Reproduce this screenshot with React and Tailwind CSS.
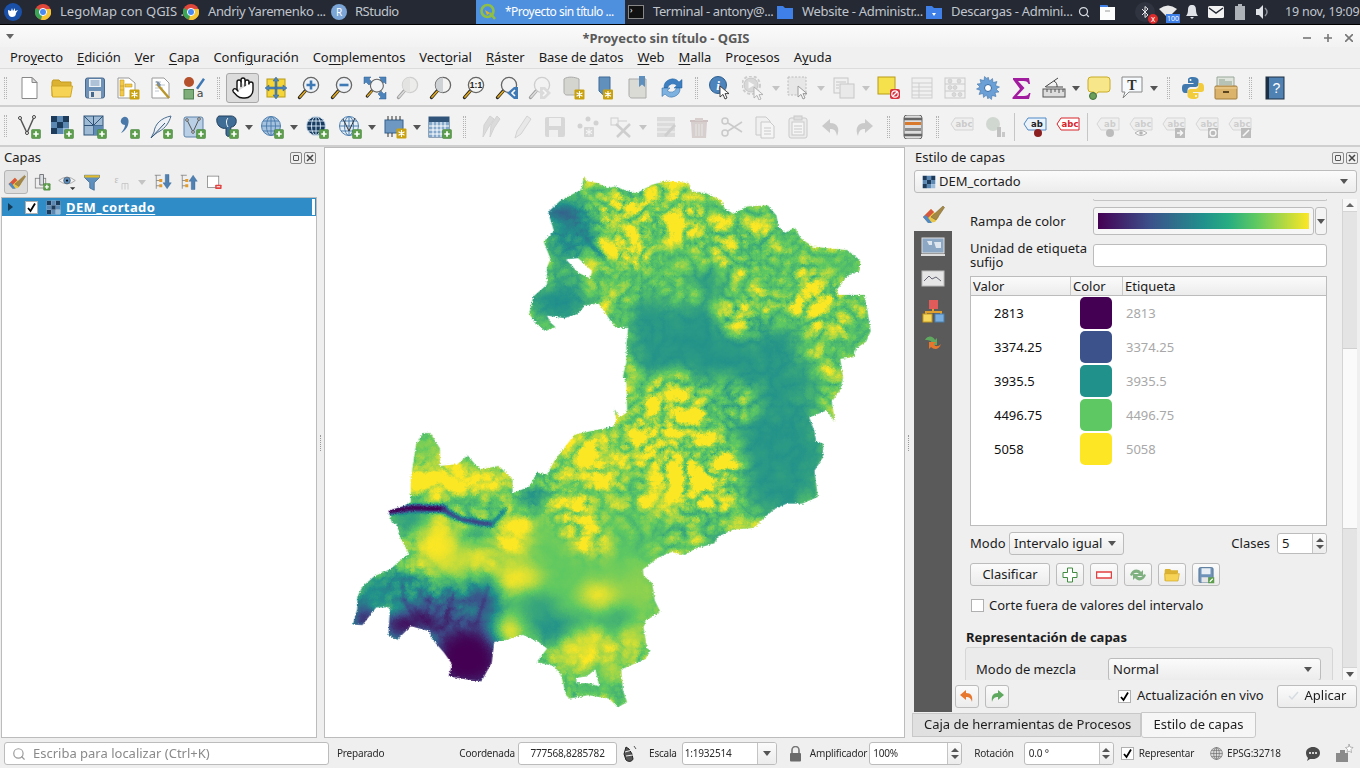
import { Hand, Search } from 'lucide-react';

const I = ({ children, s = 24, vb = '0 0 24 24' }) => (
  <svg width={s} height={s} viewBox={vb} className="block shrink-0">{children}</svg>
);

const PlusB = ({ x = 14.5, y = 14.5 }) => (
  <g transform={`translate(${x} ${y})`}>
    <rect width="9" height="9" rx="1" fill="#5d9e4c" stroke="#3f7f35" strokeWidth=".5" />
    <path d="M1.8 4.5h5.4M4.5 1.8v5.4" stroke="#fff" strokeWidth="1.7" />
  </g>
);
const StarB = ({ x = 13.5, y = 13.5, c = '#c9a10e' }) => (
  <g transform={`translate(${x} ${y})`}>
    <rect width="10" height="10" rx="1" fill={c} />
    <path d="M5 1.5v7M2 3.2l6 3.6M8 3.2l-6 3.6" stroke="#fff" strokeWidth="1.1" />
  </g>
);
const Mag = ({ lens = '#eef2f6', c = '#666', h = '#e0a81e', children }) => (
  <g>
    <path d="M9 14L2.5 21.5" stroke="#222" strokeWidth="3.4" strokeLinecap="round" />
    <path d="M8 15.5L3 21" stroke={h} strokeWidth="1.8" strokeLinecap="round" />
    <circle cx="14" cy="9" r="7.6" fill={lens} stroke={c} strokeWidth="1.3" />
    {children}
  </g>
);
const Cursor = ({ x = 11, y = 10 }) => (
  <path transform={`translate(${x} ${y})`} d="M0 0l0 11 3-2.6 2 4.6 2-1-2-4.4h4z" fill="#fff" stroke="#333" strokeWidth=".9" strokeLinejoin="round" />
);
const Checker = () => (
  <g>
    <rect x="1" y="1" width="18" height="18" fill="#fff" />
    <path d="M1 1h6v6H1zM13 1h6v6h-6zM7 7h6v6H7zM1 13h6v6H1z" fill="#1d3c5c" />
    <path d="M7 1h6v6H7zM13 7h6v6h-6zM1 7h6v6H1zM7 13h6v6H7z" fill="#5b89b4" />
    <path d="M13 13h6v6h-6z" fill="#9dbcd8" />
  </g>
);
const Globe = ({ f = '#7ea6cf', s = '#2f5f90' }) => (
  <g fill="none" stroke={s} strokeWidth="1">
    <circle cx="11" cy="11" r="9.5" fill={f} />
    <ellipse cx="11" cy="11" rx="4.5" ry="9.5" />
    <path d="M1.5 11h19M3 6h16M3 16h16M11 1.5v19" />
  </g>
);
const Tag = ({ c = '#bbb', t = 'abc', f = '#eee', tc = '#aaa' }) => (
  <g>
    <path d="M5 3h18v12H5l-4-6z" fill={f} stroke={c} />
    <text x="14" y="12" fontSize="8.5" textAnchor="middle" fill={tc} fontFamily="'DejaVu Sans',sans-serif" fontWeight="700">{t}</text>
  </g>
);

const ICONS = {
  doc: <g><path d="M5 1.5h10l5 5v16H5z" fill="#fff" stroke="#888" /><path d="M15 1.5v5h5z" fill="#ddd" stroke="#888" /></g>,
  folder: <g><path d="M2 20V6l1-2h6l2 2h10v4" fill="#dcb233" stroke="#c49a1f" /><path d="M1.5 10h21l-2 11H2.5z" fill="#f6d255" stroke="#d0a726" /></g>,
  save: <g><rect x="2.5" y="2" width="19" height="20" rx="2" fill="#6f93b8" stroke="#48698e" /><rect x="6" y="3" width="12" height="8" fill="#eef2f6" /><path d="M7.5 5h9M7.5 7h9M7.5 9h9" stroke="#6f93b8" /><rect x="6" y="15" width="12" height="7" fill="#e6e6e6" /><rect x="8" y="16" width="3" height="5" fill="#48698e" /></g>,
  saveStar: <g><path d="M2 2h11l6 5v15H2z" fill="#fff" stroke="#999" /><path d="M4 4h4v16H4zM9 8h7v3H9z" fill="#f2c94c" stroke="#c49a1f" strokeWidth=".6" /><path d="M4 10h4M4 14h4" stroke="#c49a1f" strokeWidth=".7" /><StarB /></g>,
  props: <g><path d="M3 2h12l5 5v15H3z" fill="#fff" stroke="#9a9a9a" /><path d="M6 6h6M6 9h10M6 12h8M6 15h4" stroke="#bcc6d0" /><path d="M8 8l12 14" stroke="#b9962c" strokeWidth="2.4" /><path d="M8 8l-1-3 3 1 2 3-2 2z" fill="#7b8fa3" /></g>,
  styleMgr: <g><circle cx="7" cy="6" r="5" fill="#b4512c" /><path d="M14 12l7-10 2 1.5-7 10z" fill="#3f79b5" /><rect x="2" y="13.5" width="9.5" height="9.5" fill="#7fae7a" stroke="#4f7f4f" /><text x="18" y="21" fontSize="11" textAnchor="middle" fill="#444" fontFamily="'DejaVu Sans',sans-serif">a</text></g>,
  panSel: <g><rect x="3" y="3" width="18" height="18" fill="#f5d538" stroke="#b79c14" /><path d="M12 1l3 4h-2v14h2l-3 4-3-4h2V5H9zM1 12l4-3v2h14V9l4 3-4 3v-2H5v2z" fill="#4d84bb" stroke="#2e5f90" strokeWidth=".5" /></g>,
  zoomIn: <Mag><path d="M14 4.5v9M9.5 9h9" stroke="#3f79b5" strokeWidth="2.6" /></Mag>,
  zoomOut: <Mag><path d="M9.5 9h9" stroke="#3f79b5" strokeWidth="2.6" /></Mag>,
  zoomFull: <g><path d="M1 1h7L6 3l3 3-3 3-3-3-2 2zM23 1h-7l2 2-3 3 3 3 3-3 2 2zM23 23h-7l2-2-3-3 3-3 3 3 2-2z" fill="#4d84bb" stroke="#2e5f90" strokeWidth=".5" /><g transform="translate(2 2) scale(.85)"><Mag lens="#f2f4f6" /></g></g>,
  zoomLayerOff: <g opacity=".4"><Mag c="#999" h="#bbb" lens="#e4e4e0"><path d="M14 1.5a7.5 7.5 0 0 0 0 15z" fill="#cfcfc8" /></Mag></g>,
  zoomSel: <Mag lens="#f4f4f2"><path d="M14 1.5a7.5 7.5 0 0 0 0 15z" fill="#cfd2d4" /></Mag>,
  zoomOne: <Mag lens="#f4f4f2"><text x="14" y="12" fontSize="8.5" fontWeight="700" textAnchor="middle" fill="#222" fontFamily="'Liberation Sans',sans-serif">1:1</text></Mag>,
  zoomLast: <g><Mag lens="#f2f2f2" /><path d="M23 11v12h-4l-7-6 7-6z" fill="#3f79b5" /><path d="M20 14l-3 3 3 3" stroke="#fff" strokeWidth="1.6" fill="none" /></g>,
  zoomNextOff: <g opacity=".4"><Mag c="#999" h="#bbb" lens="#f2f2f2" /><path d="M12 11v12h5l6-6-6-6z" fill="#bbb" /><path d="M15 14l3 3-3 3" stroke="#fff" strokeWidth="1.6" fill="none" /></g>,
  mapNew: <g><path d="M3 3c4-3 11-2 15 0v16H6c-3 0-3-3-3-3z" fill="#d5d5cf" stroke="#aaa" /><StarB /></g>,
  bookmark: <g><path d="M5 1h11v14l-5.5 5L5 15z" fill="#6290bd" stroke="#3f6a95" /><StarB x="9" /></g>,
  bookmarks: <g><path d="M2 3h17v19H5c-3 0-3-3-3-3z" fill="#dbdbd6" stroke="#aaa" /><path d="M12 0h6v11l-3-2.5-3 2.5z" fill="#5f8fbd" /></g>,
  refresh: <g fill="#3d7fc0" stroke="#1f5f9f" strokeWidth=".5"><path d="M4 12A8.5 8.5 0 0 1 19 6l3-2.5V12h-8l2.8-2.5A5.5 5.5 0 0 0 7.5 12z" /><path d="M20 12A8.5 8.5 0 0 1 5 18l-3 2.5V12h8l-2.8 2.5A5.5 5.5 0 0 0 16.5 12z" fill="#7db1df" /></g>,
  identify: <g><circle cx="9" cy="9" r="8.5" fill="#4d84bb" stroke="#2e5f90" /><text x="9" y="14" fontSize="13" fontWeight="700" fontStyle="italic" textAnchor="middle" fill="#fff" fontFamily="'Liberation Serif',serif">i</text><Cursor x="11" y="10" /></g>,
  runOff: <g opacity=".35"><circle cx="9" cy="9" r="7" fill="#aaa" stroke="#777" /><circle cx="9" cy="9" r="9" fill="none" stroke="#888" strokeDasharray="3 2" strokeWidth="2" /><path d="M6.5 5.5l6 3.5-6 3.5z" fill="#fff" /><Cursor x="12" y="11" /></g>,
  selectOff: <g opacity=".5"><rect x="1" y="1" width="18" height="18" fill="#ddd" stroke="#888" strokeDasharray="2 1.5" /><Cursor x="11" y="10" /></g>,
  attrOff: <g opacity=".4"><rect x="2" y="2" width="14" height="15" fill="#eee" stroke="#888" /><rect x="8" y="8" width="14" height="14" fill="#ddd" stroke="#888" /><path d="M4 6h10M4 9h3M4 12h3" stroke="#888" /></g>,
  deselect: <g><rect x="1" y="1" width="17" height="17" fill="#f5e14c" stroke="#b79c14" /><rect x="13" y="13" width="10" height="10" rx="2" fill="#d9333f" /><circle cx="18" cy="18" r="3.2" fill="none" stroke="#fff" strokeWidth="1.2" /><path d="M16 20l4-4" stroke="#fff" strokeWidth="1.2" /></g>,
  tableOff: <g opacity=".4"><rect x="2" y="2" width="20" height="20" fill="#eee" stroke="#999" /><path d="M2 7h20M2 11h20M2 15h20M2 19h20M9 7v15" stroke="#999" /></g>,
  abacusOff: <g opacity=".45"><rect x="2" y="2" width="20" height="20" fill="#f0f0f0" stroke="#999" /><path d="M2 8h20M2 15h20" stroke="#999" /><g fill="#bbb" stroke="#888" strokeWidth=".5"><circle cx="7" cy="5" r="2" /><circle cx="16" cy="5" r="2" /><circle cx="7" cy="11.5" r="2" /><circle cx="12" cy="11.5" r="2" /><circle cx="17" cy="18.5" r="2" /><circle cx="11" cy="18.5" r="2" /></g></g>,
  gear: <g><path d="M12 1l1.5 4 3-2.5.5 4 4-1-1.5 4 4 1.5-3.5 2 3 3-4 .5 1 4-4-1-.5 4-3-2.5L12 23l-1.5-4-3 2.5-.5-4-4 1 1.5-4-4-1.5 3.5-2-3-3 4-.5-1-4 4 1 .5-4 3 2.5z" fill="#6ba0d6" stroke="#3568a0" strokeWidth=".5" /><circle cx="12" cy="12" r="3.5" fill="#fff" stroke="#3568a0" /></g>,
  sigma: <path d="M4 2h16l1 6h-1.5c-.5-2-2-3-5-3H9l6.5 7L8 20h7c3 0 4.5-1 5-3h1.5L20 23H3.5v-1.5L11 13 4 3.5z" fill="#a21ca0" />,
  measure: <g><rect x="1" y="13" width="22" height="8" fill="#ddd" stroke="#555" /><path d="M5 13v3M9 13v4M13 13v3M17 13v4M21 13v3" stroke="#555" /><path d="M3 11L16 2M4 11h17M12 5a6 6 0 0 1 3 6" stroke="#444" fill="none" /></g>,
  tips: <g><path d="M4 1h16q3 0 3 3v9q0 3-3 3H11l-4 5v-5H4q-3 0-3-3V4q0-3 3-3z" fill="#f7e78a" stroke="#c8ab24" /><circle cx="6" cy="20" r="3.5" fill="#6a9e5a" stroke="#44703d" /></g>,
  textAnn: <g><path d="M2 1h20v15H9l-6 6 2-6H2z" fill="#f6fafc" stroke="#888" /><text x="12" y="14" fontSize="14" textAnchor="middle" fill="#333" fontFamily="'Liberation Serif',serif" fontWeight="700">T</text></g>,
  python: <g><path d="M12 1c-5 0-5 2-5 3v3h5.5v1H4c-3 0-3 3-3 5s1 4 3 4h2.5v-3c0-2 2-3 3-3h5c1.5 0 3-1 3-3V4c0-1.5-2-3-5.5-3z" fill="#3f79ad" /><path d="M12.5 23c5 0 5-2 5-3v-3H12v-1h8.5c3 0 2.5-3 2.5-5s-1-4-3-4h-2.5v3c0 2-2 3-3 3h-5c-1.5 0-3 1-3 3v4c0 1.5 2 3 5.5 3z" fill="#f2cc3c" /><circle cx="9.5" cy="4" r="1" fill="#fff" /><circle cx="15" cy="20" r="1" fill="#fff" /></g>,
  chest: <g><path d="M3 1h17v11H3z" fill="#dfe5dc" stroke="#9aa89a" /><path d="M5 4h6M5 6h13M5 8h13" stroke="#8fa08f" /><rect x="1" y="10" width="22" height="13" rx="1" fill="#dcb36a" stroke="#a07c3c" /><path d="M1 12h22" stroke="#f0d298" /><rect x="9" y="15" width="6" height="2" fill="#5a4520" /></g>,
  help: <g><rect x="3" y="1" width="18" height="22" fill="#4f81b2" stroke="#1e2f42" /><rect x="3" y="1" width="3" height="22" fill="#1e2f42" /><text x="13.5" y="17" fontSize="14" textAnchor="middle" fill="#fff" fontFamily="'Liberation Sans',sans-serif">?</text></g>,
  vec: <g><path d="M3 3l7 15 7-16" fill="none" stroke="#555" strokeWidth="1.5" /><g fill="#fff" stroke="#444"><circle cx="3" cy="3" r="1.5" /><circle cx="17" cy="2" r="1.5" /><circle cx="10" cy="18" r="1.5" /></g><PlusB /></g>,
  raster: <g><Checker /><PlusB /></g>,
  mesh: <g><rect x="1" y="1" width="19" height="19" fill="#9ebad4" stroke="#2f5379" /><path d="M1 10.5h19M10.5 1v19M1 1l9.5 9.5M20 1l-9.5 9.5" stroke="#2f5379" /><path d="M10.5 10.5H20V20h-9.5z" fill="#5f8ab5" /><PlusB /></g>,
  curl: <g><path d="M5 5a4 4 0 0 1 5-3c3 1 3 5 2 8s-4 7-7 8c2-3 4-5 4-8-3 0-5-3-4-5z" fill="#4a78a8" /><PlusB /></g>,
  feather: <g><path d="M22 1C12 3 6 9 5 17l-3 6c3-3 5-5 9-7 5-3 9-8 11-15z" fill="#eef2f6" stroke="#4a6d90" /><path d="M2 23L16 8" stroke="#2f5379" /><PlusB /></g>,
  vecPage: <g><rect x="2" y="2" width="19" height="20" rx="2" fill="#b8cfe5" stroke="#5f82a8" /><path d="M5 5l6 12 6-13" fill="none" stroke="#555" /><g fill="#fff" stroke="#555"><circle cx="5" cy="5" r="1.3" /><circle cx="17" cy="4" r="1.3" /><circle cx="11" cy="17" r="1.3" /></g><PlusB /></g>,
  pg: <g><path d="M4 1h12c4 0 6 3 5 7-1 3-3 4-5 4l-1 8c0 2-4 2-4-1v-6c-2 1-5 0-7-2C1 8 1 2 4 1z" fill="#3f6d96" stroke="#23415f" /><path d="M13 3c-2 2-2 6 0 9" stroke="#fff" fill="none" /><PlusB /></g>,
  wms: <g><Globe f="#a5c2de" s="#4f7fae" /><PlusB /></g>,
  wfs: <g><Globe f="#173a5e" s="#cfe0f0" /><PlusB /></g>,
  wv: <g><Globe f="#e4eef7" s="#4f7fae" /><path d="M5 4l6 12 6-13" fill="none" stroke="#333" /><PlusB /></g>,
  chip: <g><rect x="2" y="5" width="18" height="13" fill="#6e98c2" stroke="#35618e" /><path d="M5 1v4M9 1v4M13 1v4M17 1v4M5 18v4M9 18v4" stroke="#333" /><StarB /></g>,
  tableAdd: <g><rect x="1" y="2" width="20" height="20" fill="#fff" stroke="#2f5379" /><path d="M1 2h20v5H1z" fill="#2f5379" /><path d="M1 7h20v15H1z" fill="#84a8cb" /><path d="M1 11h20M1 15h20M1 19h20M5 7v15M9 7v15M13 7v15M17 7v15" stroke="#fff" /><PlusB /></g>,
  pencilsOff: <g opacity=".25"><path d="M6 22l1-12 6-9 4 3-6 9zM13 22l1-12 6-9 3 3-6 9z" fill="#999" stroke="#777" /></g>,
  pencilOff: <g opacity=".25"><path d="M5 23l2-7L17 1l4 3-10 15z" fill="#ccc" stroke="#777" /></g>,
  saveEditOff: <g opacity=".25"><rect x="2" y="2" width="20" height="20" rx="2" fill="#888" /><rect x="6" y="3" width="12" height="8" fill="#eee" /><rect x="6" y="15" width="9" height="7" fill="#eee" /></g>,
  ptsOff: <g opacity=".25"><circle cx="12" cy="4" r="2.5" fill="#777" /><circle cx="4" cy="11" r="2.5" fill="#777" /><circle cx="20" cy="8" r="2.5" fill="#777" /><StarB c="#888" x="8" y="12" /></g>,
  toolsOff: <g opacity=".25"><rect x="2" y="3" width="7" height="7" fill="none" stroke="#666" /><path d="M9 6h9" stroke="#666" /><path d="M8 22L21 9M7 9l14 13" stroke="#666" strokeWidth="2.5" /></g>,
  editTableOff: <g opacity=".25"><rect x="3" y="2" width="18" height="20" fill="#999" /><path d="M3 7h18M3 12h18M3 17h18" stroke="#fff" /><path d="M10 20l10-11 2 2-10 11z" fill="#666" /></g>,
  trashOff: <g opacity=".25"><path d="M3 6h18" stroke="#633" strokeWidth="2" /><path d="M8 3h8v3H8z" fill="#866" /><path d="M4 7h16l-1 16H5z" fill="#866" /><path d="M9 9v12M12 9v12M15 9v12" stroke="#ccc" /></g>,
  scissorsOff: <g opacity=".25" fill="none" stroke="#555" strokeWidth="1.5"><circle cx="5" cy="6" r="3" /><circle cx="5" cy="18" r="3" /><path d="M8 8l14 9M8 16l14-9" /></g>,
  copyOff: <g opacity=".25"><path d="M3 2h10l4 4v14H3z" fill="#eee" stroke="#555" /><path d="M8 7h9l4 4v12H8z" fill="#fff" stroke="#555" /><path d="M11 13h7M11 16h7M11 19h7" stroke="#555" /></g>,
  pasteOff: <g opacity=".25"><rect x="3" y="3" width="18" height="20" rx="2" fill="#ddd" stroke="#555" /><rect x="8" y="1" width="8" height="4" fill="#aaa" stroke="#555" /><rect x="6" y="7" width="12" height="13" fill="#fff" stroke="#555" /><path d="M8 11h8M8 14h8M8 17h8" stroke="#555" /></g>,
  undoOff: <g opacity=".25"><path d="M11 4L3 11l8 7v-4c4 0 6 1 7 7 3-7 1-13-7-13z" fill="#555" /></g>,
  redoOff: <g opacity=".25"><path d="M13 4l8 7-8 7v-4c-4 0-6 1-7 7-3-7-1-13 7-13z" fill="#555" /></g>,
  filterLyr: <g><rect x="3" y="0" width="18" height="24" rx="3" fill="#dedede" stroke="#666" /><path d="M3 4h18M3 20h18" stroke="#666" strokeWidth="2.5" /><rect x="4" y="7" width="16" height="3" fill="#d8792c" /><rect x="4" y="13" width="16" height="3" fill="#8a8a8a" /></g>,
  tagOff: <g opacity=".55"><Tag /></g>,
  pinOff: <g opacity=".45"><circle cx="10" cy="9" r="7" fill="#a9b8a9" /><rect x="14" y="12" width="4" height="10" fill="#888" /><rect x="19" y="17" width="3" height="5" fill="#999" /></g>,
  tagPin: <g><Tag c="#4f89c5" t="ab" f="#eaf2fb" tc="#222" /><circle cx="15" cy="18" r="4" fill="#8c2020" /></g>,
  tagRed: <Tag c="#d8242a" f="#fff" tc="#d8242a" />,
  tagPinOff: <g opacity=".5"><Tag t="ab" /><circle cx="14" cy="18" r="4" fill="#888" /></g>,
  tagEyeOff: <g opacity=".5"><Tag /><path d="M6 18q6-5 12 0-6 5-12 0z" fill="#fff" stroke="#777" /><circle cx="12" cy="18" r="1.8" fill="#777" /></g>,
  tagArrowOff: <g opacity=".5"><Tag /><rect x="13" y="13" width="10" height="10" fill="#888" /><path d="M15 18h5M18 15.5l2.5 2.5-2.5 2.5" stroke="#fff" fill="none" strokeWidth="1.4" /></g>,
  tagRotOff: <g opacity=".5"><Tag /><rect x="13" y="13" width="10" height="10" fill="#888" /><circle cx="18" cy="18" r="3" stroke="#fff" fill="none" strokeWidth="1.3" /></g>,
  tagEditOff: <g opacity=".5"><Tag /><rect x="13" y="13" width="10" height="10" fill="#888" /><path d="M15 21l6-6" stroke="#fff" strokeWidth="1.6" /></g>,
  brush: <g><path d="M2 14l8-8 8 8-4 5-7 1z" fill="#e8c64a" /><path d="M2 14l8-8 3 3-8 8z" fill="#d8553f" /><path d="M7 20l-5-6 3-2 6 8z" fill="#4f8ac4" /><path d="M10 14l12-11 1.5 1.5L15 17z" fill="#a68846" stroke="#75602f" strokeWidth=".5" /></g>,
  addGroup: <g><rect x="3" y="7" width="14" height="13" fill="#eee" stroke="#777" /><path d="M9 2h5v14H9z" fill="#d9dfe5" stroke="#555" /><PlusB x="14" y="14" /></g>,
  eye: <g><path d="M1 10q11-9 22 0-11 9-22 0z" fill="#f4f4f4" stroke="#999" /><circle cx="12" cy="10" r="4.5" fill="#5f8fbd" stroke="#333" strokeWidth=".6" /><circle cx="12" cy="10" r="1.5" fill="#111" /><path d="M16 19h7l-3.5 3.5z" fill="#333" /></g>,
  funnel: <g><path d="M2 3h20v3l-7 7v10l-6-3v-7L2 6z" fill="#5f8fbd" stroke="#3b6690" /><path d="M2 3h20v3H2z" fill="#e2bb2f" /></g>,
  expr: <g opacity=".45"><text x="2" y="13" fontSize="13" fill="#777" fontFamily="'Liberation Serif',serif">ε</text><path d="M12 22v-8h8v8M16 14v8" stroke="#888" fill="none" /></g>,
  expand: <g><path d="M1 3h8M3 3v18M3 10h6M3 17h6" stroke="#777" fill="none" /><rect x="7" y="8" width="4" height="4" fill="#e49a2b" /><rect x="7" y="15" width="4" height="4" fill="#e49a2b" /><path d="M15 2h5v11h3l-5.5 8L12 13h3z" fill="#4f81b2" stroke="#2f5f90" strokeWidth=".5" /></g>,
  collapse: <g><path d="M1 3h8M3 3v18M3 10h6M3 17h6" stroke="#777" fill="none" /><rect x="7" y="8" width="4" height="4" fill="#e49a2b" /><rect x="7" y="15" width="4" height="4" fill="#e49a2b" /><path d="M15 22h5V11h3L17.5 3 12 11h3z" fill="#4f81b2" stroke="#2f5f90" strokeWidth=".5" /></g>,
  removeLyr: <g><rect x="2" y="3" width="16" height="16" fill="#fff" stroke="#777" /><rect x="13" y="15" width="9" height="6" rx="1" fill="#e24141" /><path d="M15 18h5" stroke="#fff" strokeWidth="1.4" /></g>,
  globeSm: <g transform="translate(1 1)"><Globe f="#d9d9d9" s="#666" /></g>,
};

const Tool = ({ name }) => (
  <div className="w-[33px] h-[30px] flex items-center justify-center shrink-0">
    <I>{ICONS[name]}</I>
  </div>
);
const Caret = ({ off }) => (
  <div className="w-[12px] flex items-center justify-center shrink-0">
    <div className={`w-0 h-0 border-x-[4px] border-x-transparent border-t-[5px] ${off ? 'border-t-[#c4c4c4]' : 'border-t-[#555]'}`} />
  </div>
);
const Grip = () => (
  <div className="w-[16px] flex items-center justify-center shrink-0">
    <div className="h-[22px] w-[3px] border-x border-dotted border-[#b4b4b4]" />
  </div>
);
const Thin = () => (
  <div className="w-[7px] flex items-center justify-center shrink-0">
    <div className="h-[28px] w-px bg-[#c6c6c6]" />
  </div>
);

const row1 = ['doc', 'folder', 'save', 'saveStar', 'props', 'styleMgr', '|', 'PAN', 'panSel', 'zoomIn', 'zoomOut', 'zoomFull', 'zoomLayerOff', 'zoomSel', 'zoomOne', 'zoomLast', 'zoomNextOff', 'mapNew', 'bookmark', 'bookmarks', 'refresh', '|', 'identify', 'runOff', 'w', 'selectOff', 'w', 'attrOff', 'w', 'deselect', 'tableOff', 'abacusOff', 'gear', 'sigma', 'measure', 'v', 'tips', 'textAnn', 'v', '|', 'python', 'chest', '|', 'help'];
const row2 = ['vec', 'raster', 'mesh', 'curl', 'feather', 'vecPage', 'pg', 'v', 'wms', 'v', 'wfs', 'wv', 'v', 'chip', 'v', 'tableAdd', '|', 'pencilsOff', 'pencilOff', 'saveEditOff', 'ptsOff', 'toolsOff', 'w', 'editTableOff', 'trashOff', 'scissorsOff', 'copyOff', 'pasteOff', 'undoOff', 'redoOff', '|', 'filterLyr', '|', 'tagOff', 'pinOff', ':', 'tagPin', 'tagRed', ':', 'tagPinOff', 'tagEyeOff', 'tagArrowOff', 'tagRotOff', 'tagEditOff'];

const ToolRow = ({ items, h }) => (
  <div className={`${h} flex items-center pl-[12px] pt-[2px] border-b-2 border-[#cfcfcf] bg-[#f2f2f2] relative`}>
    <div className="absolute left-[4px] top-[8px] h-[22px] w-[3px] border-x border-dotted border-[#b4b4b4]" />
    {items.map((it, i) => {
      if (it === '|') return <Grip key={i} />;
      if (it === ':') return <Thin key={i} />;
      if (it === 'v') return <Caret key={i} />;
      if (it === 'w') return <Caret key={i} off />;
      if (it === 'PAN')
        return (
          <div key={i} className="w-[33px] h-[30px] flex items-center justify-center shrink-0 bg-[#dcdcdc] border border-[#a8a8a8] rounded-[3px]">
            <Hand size={24} strokeWidth={1.4} fill="#fff" color="#111" />
          </div>
        );
      return <Tool key={i} name={it} />;
    })}
  </div>
);

const Task = ({ icon, label, w, active, fit = '' }) => (
  <div className={`${w} h-full flex items-center shrink-0 ${active ? 'bg-[#4f90de] text-white' : 'text-[#c0c5cd]'}`}>
    {icon}
    <span className={`whitespace-nowrap ${fit}`}>{label}</span>
  </div>
);
const Chrome = () => (
  <svg width="16" height="16" viewBox="0 0 16 16" className="mx-[9px] shrink-0">
    <circle cx="8" cy="8" r="8" fill="#e0473a" />
    <path d="M8 8L1 4a8 8 0 0 0 5 11.8z" fill="#3aa655" />
    <path d="M8 8l-2 7.8A8 8 0 0 0 15.5 5H8z" fill="#f5c431" />
    <circle cx="8" cy="8" r="3.6" fill="#4a8af0" stroke="#fff" />
  </svg>
);
const TaskFolder = ({ dl }) => (
  <svg width="16" height="14" viewBox="0 0 16 14" className="ml-[3px] mr-[9px] shrink-0">
    <path d="M0 1h6l2 2h8v11H0z" fill="#3f7fe8" />
    {dl && <path d="M6 8h4L8 11z" fill="#fff" />}
  </svg>
);

const TopBar = () => (
  <div className="h-[25px] bg-[#242933] border-b border-black flex items-center text-[13px] shrink-0 overflow-hidden">
    <div className="w-[26px] h-full flex items-center justify-center shrink-0">
      <div className="w-[18px] h-[18px] rounded-full bg-[#1a50a8] flex items-center justify-center">
        <svg width="12" height="12" viewBox="0 0 12 12"><path d="M1 4l3 1 1-3 1 3 2-3 0 3 3-1-2 3c0 3-2 4-4 4-3 0-4-3-4-7z" fill="#fff" /></svg>
      </div>
    </div>
    <Task w="w-[148px]" icon={<Chrome />} label="LegoMap con QGIS ..." />
    <Task w="w-[149px]" icon={<Chrome />} label="Andriy Yaremenko ..." fit="tracking-[-0.4px]" />
    <Task
      w="w-[153px]"
      icon={
        <div className="mx-[8px] w-[16px] h-[16px] rounded-full bg-[#7aa5d6] text-white text-[10px] flex items-center justify-center shrink-0">R</div>
      }
      label="RStudio"
      fit="tracking-[-0.5px]"
    />
    <Task
      active
      w="w-[149px]"
      icon={
        <svg width="18" height="18" viewBox="0 0 18 18" className="ml-[3px] mr-[8px] shrink-0">
          <circle cx="8.5" cy="8" r="6" fill="none" stroke="#8fbf45" strokeWidth="2.6" />
          <path d="M11 10l5 6" stroke="#8fbf45" strokeWidth="2.6" />
          <path d="M6 7l5 3-3 2z" fill="#e2b21e" />
        </svg>
      }
      label="*Proyecto sin título ..."
      fit="text-[12px] tracking-[-0.5px]"
    />
    <Task
      w="w-[149px]"
      icon={
        <div className="ml-[3px] mr-[9px] w-[16px] h-[14px] bg-[#111] border border-[#888] text-[8px] leading-none text-white shrink-0 pl-[1px]">›</div>
      }
      label="Terminal - antony@..."
      fit="tracking-[-0.4px]"
    />
    <Task w="w-[149px]" icon={<TaskFolder />} label="Website - Administr..." fit="tracking-[-0.3px]" />
    <Task w="w-[146px]" icon={<TaskFolder dl />} label="Descargas - Admini..." fit="tracking-[-0.3px]" />
    <div className="w-[16px] shrink-0 flex justify-center ml-[7px]">
      <Search size={12} color="#d6dae0" strokeWidth={2.5} />
    </div>
    <svg width="17" height="17" viewBox="0 0 17 17" className="ml-[7px] shrink-0">
      <path d="M1 1h7l1 2h7v13H1z" fill="#fdfdfd" />
      <path d="M1 1h7l1 2H1z" fill="#3f7fe8" />
      <path d="M6 7h5" stroke="#999" />
    </svg>
    <div className="relative ml-[19px] w-[20px] h-[20px] rounded-full bg-[#2f3440] flex items-center justify-center shrink-0">
      <svg width="8" height="12" viewBox="0 0 8 12"><path d="M1 3l6 6-3 2.5V.5L7 3 1 9" fill="none" stroke="#e8e8e8" /></svg>
      <div className="absolute right-[-3px] bottom-[-2px] w-[10px] h-[10px] rounded-full bg-[#d92b2b] text-white text-[8px] leading-[9px] text-center">x</div>
    </div>
    <div className="relative ml-[3px] w-[20px] h-[16px] shrink-0">
      <svg width="20" height="14" viewBox="0 0 20 14"><path d="M1 5q9-7 18 0l-9 9z" fill="#e8e8e8" /></svg>
      <div className="absolute right-[-2px] bottom-[-3px] bg-[#3f7fe8] text-white text-[7px] leading-[9px] px-[1px]">100</div>
    </div>
    <svg width="14" height="16" viewBox="0 0 14 16" className="ml-[7px] shrink-0"><path d="M7 1c3 0 4 2 4 5 0 3 1 5 2 6H1c1-1 2-3 2-6 0-3 1-5 4-5zM5 13h4l-2 2z" fill="#dfe2e6" /></svg>
    <svg width="16" height="12" viewBox="0 0 16 12" className="ml-[9px] shrink-0"><rect width="16" height="12" rx="1.5" fill="#f2f2f2" /><path d="M1 2l7 5 7-5" fill="none" stroke="#242933" strokeWidth="1.5" /></svg>
    <svg width="10" height="16" viewBox="0 0 10 16" className="ml-[11px] shrink-0"><path d="M3 0h4v2h3v14H0V2h3z" fill="#aeb3ba" /></svg>
    <svg width="14" height="14" viewBox="0 0 14 14" className="ml-[11px] shrink-0"><path d="M0 4h3l4-4v14l-4-4H0z" fill="#dfe2e6" /><path d="M9 3q4 4 0 8" stroke="#8a8f98" fill="none" strokeWidth="1.5" /></svg>
    <span className="ml-[15px] text-[#c0c5cd] whitespace-nowrap text-[12.5px] tracking-[-0.2px]">19 nov, 19:09</span>
  </div>
);

const TitleBar = () => (
  <div className="h-[22px] bg-linear-to-b from-[#fbfbfb] to-[#f2f2f2] flex items-center relative shrink-0">
    <div className="ml-[6px] w-0 h-0 border-x-[4px] border-x-transparent border-t-[5px] border-t-[#666]" />
    <div className="flex-1 text-center font-bold text-[13px] tracking-[-0.05px] text-[#5a5a5a] pl-[15px] pt-[3px] leading-[16px]">*Proyecto sin título - QGIS</div>
    <div className="flex items-center gap-[13px] pr-[7px] pt-[3px] text-[#777]">
      <svg width="8" height="8" viewBox="0 0 8 8"><path d="M0 4h8" stroke="#777" strokeWidth="1.6" /></svg>
      <svg width="8" height="8" viewBox="0 0 8 8"><path d="M0 4h8M4 0v8" stroke="#777" strokeWidth="1.6" /></svg>
      <svg width="8" height="8" viewBox="0 0 8 8"><path d="M0 0l8 8M8 0L0 8" stroke="#777" strokeWidth="1.6" /></svg>
    </div>
  </div>
);

const U = ({ children }) => <span className="underline underline-offset-2 decoration-1">{children}</span>;
const MenuBar = () => (
  <div className="h-[22px] bg-[#f0f0f0] flex items-center pl-[10px] pt-[1px] gap-[14px] text-[13px] tracking-[-0.05px] text-[#1a1a1a] shrink-0 border-b border-[#dcdcdc]">
    <span>Pro<U>y</U>ecto</span>
    <span><U>E</U>dición</span>
    <span><U>V</U>er</span>
    <span><U>C</U>apa</span>
    <span>Confi<U>g</U>uración</span>
    <span>Co<U>m</U>plementos</span>
    <span>Vect<U>o</U>rial</span>
    <span><U>R</U>áster</span>
    <span>Base de <U>d</U>atos</span>
    <span><U>W</U>eb</span>
    <span><U>M</U>alla</span>
    <span>Pro<U>c</U>esos</span>
    <span>A<U>y</U>uda</span>
  </div>
);

const Dock = () => (
  <div className="flex gap-[2px]">
    <div className="w-[12px] h-[12px] border border-[#888] rounded-[2px] flex items-center justify-center">
      <div className="w-[6px] h-[6px] border border-[#555] rounded-[1px]" />
    </div>
    <div className="w-[12px] h-[12px] border border-[#888] rounded-[2px] flex items-center justify-center">
      <svg width="8" height="8" viewBox="0 0 8 8"><path d="M1 1l6 6M7 1L1 7" stroke="#444" strokeWidth="1.5" /></svg>
    </div>
  </div>
);

const Check = ({ on = true }) => (
  <div className="w-[13px] h-[13px] bg-white border border-[#b0b0b0] flex items-center justify-center shrink-0">
    {on && <svg width="11" height="11" viewBox="0 0 11 11"><path d="M2 6l2.5 3L9 1.5" fill="none" stroke="#000" strokeWidth="1.8" /></svg>}
  </div>
);

const LayersPanel = () => (
  <div className="w-[318px] shrink-0 flex flex-col bg-[#efefef]">
    <div className="h-[22px] flex items-center justify-between pl-[4px] pr-[2px] text-[13px] text-[#222]">
      <span>Capas</span>
      <Dock />
    </div>
    <div className="h-[27px] flex items-center pl-[4px] pb-[1px]">
      <div className="w-[24px] h-[24px] bg-[#dcdcdc] border border-[#b4b4b4] rounded-[3px] flex items-center justify-center">
        <I s={19}>{ICONS.brush}</I>
      </div>
      <div className="w-[25px] flex justify-center ml-[1px]"><I s={18}>{ICONS.addGroup}</I></div>
      <div className="w-[26px] flex justify-center"><I s={18}>{ICONS.eye}</I></div>
      <div className="w-[24px] flex justify-center"><I s={18}>{ICONS.funnel}</I></div>
      <div className="w-[28px] flex justify-center ml-[4px]"><I s={18}>{ICONS.expr}</I></div>
      <Caret off />
      <div className="w-[26px] flex justify-center ml-[2px]"><I s={18}>{ICONS.expand}</I></div>
      <div className="w-[26px] flex justify-center"><I s={18}>{ICONS.collapse}</I></div>
      <div className="w-[24px] flex justify-center"><I s={17}>{ICONS.removeLyr}</I></div>
    </div>
    <div className="flex-1 mx-[1px] mt-[1px] bg-white border border-[#bcbcbc]">
      <div className="h-[18px] bg-[#308cc6] flex items-center relative">
        <div className="ml-[6px] w-0 h-0 border-y-[4px] border-y-transparent border-l-[5px] border-l-[#143a55]" />
        <div className="ml-[12px]"><Check /></div>
        <div className="ml-[8px]">
          <svg width="15" height="15" viewBox="0 0 20 20"><Checker /></svg>
        </div>
        <span className="ml-[5px] text-[13px] font-bold text-white underline underline-offset-2 tracking-[.4px] leading-none">DEM_cortado</span>
        <div className="absolute right-[1px] top-[1px] w-[3px] h-[16px] bg-white" />
      </div>
    </div>
  </div>
);

const OUTLINE = 'M707 20L715 35 745 40 775 55 800 50 820 60 860 70 905 45 945 35 1010 40 1020 65 1060 70 1105 90 1115 115 1140 130 1180 108 1240 105 1265 135 1270 165 1290 185 1318 170 1335 200 1370 225 1470 235 1508 265 1505 295 1470 310 1440 350 1445 365 1520 365 1530 420 1538 470 1525 500 1495 520 1490 545 1450 550 1458 605 1450 640 1425 675 1435 733 1410 700 1360 720 1375 760 1380 790 1400 795 1400 835 1375 875 1385 950 1340 970 1295 970 1260 985 1230 1010 1200 1040 1140 1045 1095 1065 1085 1085 1030 1100 1000 1118 960 1110 925 1125 878 1160 880 1178 905 1200 912 1250 928 1283 885 1310 880 1330 890 1390 900 1395 885 1420 815 1450 820 1510 832 1545 805 1560 780 1535 720 1525 665 1535 655 1525 640 1465 620 1440 570 1430 600 1390 575 1370 530 1350 480 1365 447 1370 440 1430 410 1485 370 1480 315 1470 325 1435 300 1400 265 1360 260 1340 205 1325 165 1365 140 1350 145 1270 105 1270 65 1322 37 1320 50 1275 50 1240 65 1210 100 1180 145 1160 180 1130 200 1115 175 1070 165 1030 150 1025 140 990 190 975 205 965 205 900 220 800 240 765 262 765 290 810 290 860 340 855 370 830 395 860 410 870 460 860 500 900 500 940 550 920 570 880 600 885 625 840 680 770 795 745 800 725 795 695 810 720 832 705 830 620 820 600 830 560 830 510 835 460 800 460 770 420 750 390 710 395 690 420 650 432 600 425 610 445 625 458 595 470 570 450 548 420 560 370 600 335 600 285 610 260 590 210 620 180 603 125 640 90 700 60Z M655 262L690 258 730 295 725 317 690 300Z M685 1475L715 1470 740 1450 752 1500 720 1490 685 1490Z';

// elevation field: [cx, cy, rx, ry, elevation, roughness, rotation]
const BLOBS = [
  [1080, 520, 240, 130, 0.5, 0.05],
  [1270, 820, 130, 190, 0.5, 0.08],
  [1250, 640, 130, 110, 0.5, 0.12],
  [1010, 520, 90, 70, 0.5, 0.05],
  [1070, 320, 50, 45, 0.5, 0.1],
  [900, 450, 60, 90, 0.5, 0.1],
  [880, 130, 170, 70, 0.55, 1],
  [1000, 130, 70, 70, 0.62, 1],
  [1150, 220, 100, 80, 0.55, 0.9],
  [830, 230, 80, 50, 0.66, 1, 30],
  [1220, 180, 60, 50, 0.55, 0.7],
  [1400, 370, 110, 90, 0.58, 0.9],
  [1440, 290, 60, 30, 0.68, 0.3],
  [1180, 430, 90, 60, 0.5, 0.8],
  [650, 130, 60, 45, 0.26, 0.1],
  [680, 200, 65, 55, 0.38, 0.4],
  [640, 390, 90, 60, 0.48, 0.1],
  [660, 300, 60, 40, 0.55, 0.4],
  [950, 740, 110, 130, 0.62, 1],
  [1040, 880, 130, 110, 0.58, 1],
  [930, 975, 55, 50, 0.86, 0.5],
  [980, 640, 100, 50, 0.56, 0.9],
  [1120, 680, 90, 70, 0.5, 0.7],
  [1030, 1030, 150, 40, 0.52, 0.6],
  [700, 1150, 230, 170, 0.75, 0.03],
  [860, 1240, 60, 90, 0.82, 0.01],
  [750, 850, 100, 80, 0.72, 0.7],
  [680, 1000, 60, 140, 0.66, 0.8, -35],
  [880, 1060, 70, 60, 0.62, 0.3],
  [340, 910, 150, 55, 0.9, 0.5],
  [255, 810, 35, 45, 0.78, 0.1],
  [360, 860, 40, 20, 0.75, 0.2],
  [300, 965, 190, 20, 0.45, 0.5],
  [570, 950, 45, 35, 0.42, 0.3],
  [200, 1020, 50, 35, 0.52, 0.1],
  [360, 1070, 130, 20, 0.5, 0.2],
  [360, 1130, 130, 40, 0.76, 0.15],
  [500, 1060, 55, 65, 0.9, 0.3],
  [285, 1085, 60, 75, 1, 0],
  [400, 1125, 45, 40, 1, 0.05],
  [510, 1195, 75, 48, 1, 0.05],
  [560, 1290, 80, 70, 0.56, 0.05],
  [640, 1340, 70, 40, 0.45, 0.1],
  [770, 1310, 90, 50, 0.56, 0.1],
  [750, 1240, 55, 38, 1, 0.05],
  [700, 1390, 90, 55, 0.92, 0.2, -30],
  [845, 1360, 40, 38, 0.95, 0.1],
  [800, 1430, 30, 25, 0.9, 0.1],
  [480, 1335, 55, 46, 1, 0],
  [760, 1480, 60, 30, 0.7, 0.1],
  [330, 1280, 115, 90, 0.18, 0.6],
  [180, 1210, 60, 45, 0.28, 0.5],
  [100, 1225, 60, 32, 0.42, 0.15],
  [420, 1260, 45, 75, 0.22, 0.2],
  [335, 1180, 50, 30, 0.78, 0.15],
  [230, 1310, 85, 40, 0, 0.08],
  [370, 1420, 105, 95, 0, 0],
  [70, 1300, 45, 38, 0, 0],
  [165, 1330, 40, 50, 0, 0],
];

const field = (e, r) => `rgb(${Math.round(e * 255)},${Math.round(r * 255)},0)`;

const TerrainMap = () => (
  <svg width="540" height="540" viewBox="0 0 1565 1565" className="block">
    <defs>
      <clipPath id="outline"><path d={OUTLINE} clipRule="evenodd" /></clipPath>
      <filter id="blurL" filterUnits="userSpaceOnUse" x="0" y="0" width="1565" height="1565" colorInterpolationFilters="sRGB"><feGaussianBlur stdDeviation="24" /></filter>
      <filter id="blurS" filterUnits="userSpaceOnUse" x="0" y="0" width="1565" height="1565" colorInterpolationFilters="sRGB"><feGaussianBlur stdDeviation="4" /></filter>
      <filter id="terrain" filterUnits="userSpaceOnUse" x="0" y="0" width="1565" height="1565" colorInterpolationFilters="sRGB">
        <feColorMatrix in="SourceGraphic" type="matrix" values="1 0 0 0 0 1 0 0 0 0 1 0 0 0 0 0 0 0 0 1" result="elev" />
        <feColorMatrix in="SourceGraphic" type="matrix" values="0 1 0 0 0 0 1 0 0 0 0 1 0 0 0 0 0 0 0 1" result="rough" />
        <feTurbulence type="turbulence" baseFrequency="0.016" numOctaves="6" seed="11" result="t" />
        <feColorMatrix in="t" type="matrix" values="1 0 0 0 0 1 0 0 0 0 1 0 0 0 0 0 0 0 0 1" result="noise" />
        <feComposite in="rough" in2="noise" operator="arithmetic" k1="1" k2="0" k3="0" k4="0" result="bump" />
        <feComposite in="elev" in2="bump" operator="arithmetic" k1="0" k2="1" k3="0.95" k4="0" result="h" />
        <feComponentTransfer in="h">
          <feFuncR type="table" tableValues="0.267 0.231 0.129 0.369 0.992" />
          <feFuncG type="table" tableValues="0.004 0.322 0.569 0.788 0.906" />
          <feFuncB type="table" tableValues="0.329 0.545 0.549 0.384 0.145" />
        </feComponentTransfer>
      </filter>
      <filter id="jag" filterUnits="userSpaceOnUse" x="0" y="0" width="1565" height="1565" colorInterpolationFilters="sRGB">
        <feTurbulence type="fractalNoise" baseFrequency="0.2" numOctaves="2" seed="4" result="j" />
        <feDisplacementMap in="SourceGraphic" in2="j" scale="9" xChannelSelector="R" yChannelSelector="G" />
      </filter>
    </defs>
    <g filter="url(#jag)">
      <g clipPath="url(#outline)">
        <g filter="url(#terrain)">
          <rect width="1565" height="1565" fill={field(0.6, 0.55)} />
          <g filter="url(#blurL)">
            {BLOBS.map(([cx, cy, rx, ry, e, r, rot], i) => (
              <ellipse key={i} cx={cx} cy={cy} rx={rx} ry={ry} fill={field(e, r)} transform={rot ? `rotate(${rot} ${cx} ${cy})` : undefined} />
            ))}
          </g>
          <g filter="url(#blurS)" fill="none" strokeLinecap="round" strokeLinejoin="round">
            <path d="M140 992L210 982 300 985" stroke={field(0, 0)} strokeWidth="20" />
            <path d="M300 988L350 1015 440 1030" stroke={field(0.16, 0.05)} strokeWidth="15" />
            <path d="M440 1030L480 985" stroke={field(0.32, 0.1)} strokeWidth="9" />
            <path d="M690 170L730 220 770 260" stroke={field(0.36, 0.2)} strokeWidth="8" />
            <path d="M180 1200L185 1250 215 1300M260 1240L250 1310M330 1230L300 1320M430 1210L395 1320" stroke={field(0.06, 0.1)} strokeWidth="5" />
          </g>
        </g>
      </g>
    </g>
  </svg>
);

const Btn = ({ children, w = 'w-[28px]' }) => (
  <div className={`${w} h-[23px] shrink-0 flex items-center justify-center rounded-[3px] border border-[#bcbcbc] bg-linear-to-b from-[#fbfbfb] to-[#ececec]`}>
    {children}
  </div>
);
const SpinArrows = () => (
  <div className="w-[14px] h-full border-l border-[#c4c4c4] flex flex-col items-center justify-center gap-[3px] bg-linear-to-b from-[#fbfbfb] to-[#ececec] rounded-r-[3px]">
    <div className="w-0 h-0 border-x-[4px] border-x-transparent border-b-[4px] border-b-[#555]" />
    <div className="w-0 h-0 border-x-[4px] border-x-transparent border-t-[4px] border-t-[#555]" />
  </div>
);
const DownTri = () => <div className="w-0 h-0 border-x-[4px] border-x-transparent border-t-[5px] border-t-[#555]" />;

const CLASSES = [
  ['2813', '#440154'],
  ['3374.25', '#3b528b'],
  ['3935.5', '#21918c'],
  ['4496.75', '#5ec962'],
  ['5058', '#fde725'],
];

const SideTab = ({ children }) => <div className="h-[32px] flex items-center justify-center">{children}</div>;

const StylePanel = () => (
  <div className="flex-1 min-w-0 flex flex-col bg-[#efefef] text-[13px] text-[#1c1c1c]">
    <div className="flex-1 min-h-0 flex flex-col pl-[2px]">
      <div className="h-[23px] flex items-center justify-between pr-[2px] pl-[1px] pb-[2px]">
        <span>Estilo de capas</span>
        <Dock />
      </div>
      <div className="h-[23px] mr-[3px] flex items-center pl-[7px] pr-[8px] rounded-[3px] border border-[#bcbcbc] bg-linear-to-b from-[#fbfbfb] to-[#ececec]">
        <svg width="14" height="14" viewBox="0 0 20 20"><Checker /></svg>
        <span className="ml-[3px]">DEM_cortado</span>
        <div className="ml-auto"><DownTri /></div>
      </div>
      <div className="flex-1 min-h-0 flex mt-[6px]">
        <div className="w-[38px] shrink-0 flex flex-col">
          <div className="h-[32px] flex items-center justify-center"><I s={24}>{ICONS.brush}</I></div>
          <div className="flex-1 bg-[#5a5a5a]">
            <SideTab>
              <svg width="24" height="22" viewBox="0 0 24 22"><rect x="1" y="2" width="22" height="15" fill="#8ca7c4" stroke="#ddd" /><path d="M6 5h5v4H8zM13 6h7v6h-5z" fill="#dfe6ee" /><path d="M0 19h24" stroke="#ddd" strokeWidth="2" /></svg>
            </SideTab>
            <SideTab>
              <svg width="24" height="18" viewBox="0 0 24 18"><rect x="1" y="1" width="22" height="15" fill="#e6e6e6" stroke="#bbb" /><path d="M3 11l5-5 3 3 4-2 5 4" fill="none" stroke="#667" /></svg>
            </SideTab>
            <SideTab>
              <svg width="23" height="24" viewBox="0 0 23 24"><rect x="7" y="1" width="9" height="9" fill="#e25b5b" /><path d="M11 10v3M4 16v-3h15v3" stroke="#e0a030" strokeWidth="2" fill="none" /><rect x="1" y="15" width="9" height="8" fill="#f5d75e" stroke="#c49a1f" /><rect x="13" y="15" width="9" height="8" fill="#79aee0" stroke="#4a7fae" /></svg>
            </SideTab>
            <SideTab>
              <svg width="20" height="22" viewBox="0 0 20 22"><path d="M2 8c3-5 8-4 10 0l2-2v7H7l2-2c-1-3-4-3-7-3z" fill="#5fa85f" /><path d="M18 12c-2 6-7 6-10 3l-2 2v-7h7l-2 2c1 3 4 3 7 0z" fill="#e8772e" /></svg>
            </SideTab>
          </div>
        </div>
        <div className="flex-1 min-w-0 flex flex-col">
          <div className="flex-1 min-h-0 flex">
            <div className="flex-1 min-w-0 overflow-hidden pl-[18px] pr-[15px]">
              <div className="h-[2px] ml-[123px] border border-t-0 border-[#c4c4c4] rounded-b-[3px]" />
              <div className="mt-[6px] h-[28px] flex items-center">
                <span className="w-[123px] pt-[1px]">Rampa de color</span>
                <div className="flex-1 h-full rounded-[3px] border border-[#bcbcbc] bg-[#f6f6f6] flex items-center px-[4px]">
                  <div className="w-full h-[16px] bg-[linear-gradient(90deg,#440154,#3b528b_25%,#21918c_50%,#27ad81_62%,#5ec962_75%,#fde725)]" />
                </div>
                <div className="w-[12px] h-full ml-[1px] rounded-[3px] border border-[#bcbcbc] bg-[#f4f4f4] flex items-center justify-center">
                  <DownTri />
                </div>
              </div>
              <div className="mt-[9px] h-[23px] flex">
                <span className="w-[123px] leading-[14px] mt-[-3px]">Unidad de etiqueta sufijo</span>
                <div className="flex-1 h-full rounded-[3px] border border-[#bcbcbc] bg-white" />
              </div>
              <div className="mt-[9px] h-[250px] border border-[#bcbcbc] bg-white flex flex-col">
                <div className="h-[19px] shrink-0 flex border-b border-[#bcbcbc] bg-linear-to-b from-[#fbfbfb] to-[#ececec] leading-[18px]">
                  <span className="w-[100px] pl-[2px] border-r border-[#c8c8c8]">Valor</span>
                  <span className="w-[52px] pl-[2px] border-r border-[#c8c8c8]">Color</span>
                  <span className="pl-[2px]">Etiqueta</span>
                </div>
                {CLASSES.map(([v, c]) => (
                  <div key={v} className="h-[34px] flex items-center text-[#111]">
                    <span className="w-[109px] pl-[23px] pt-[2px]">{v}</span>
                    <div className="w-[32px] h-[32px] rounded-[5px] shrink-0" style={{ backgroundColor: c }} />
                    <span className="ml-[14px] pt-[2px] text-[#a8a8a8]">{v}</span>
                  </div>
                ))}
              </div>
              <div className="mt-[6px] h-[23px] flex items-center">
                <span className="w-[39px]">Modo</span>
                <div className="w-[115px] h-[23px] flex items-center justify-between pl-[4px] pr-[7px] rounded-[3px] border border-[#bcbcbc] bg-linear-to-b from-[#fbfbfb] to-[#ececec]">
                  <span>Intervalo igual</span>
                  <DownTri />
                </div>
                <span className="ml-auto">Clases</span>
                <div className="ml-[7px] w-[50px] h-[21px] flex justify-between rounded-[3px] border border-[#bcbcbc] bg-white pl-[4px] leading-[19px]">
                  5
                  <SpinArrows />
                </div>
              </div>
              <div className="mt-[8px] flex gap-[6px]">
                <Btn w="w-[80px]">Clasificar</Btn>
                <Btn><svg width="16" height="16" viewBox="0 0 16 16"><path d="M5.5 1h5v4.5H15v5h-4.5V15h-5v-4.5H1v-5h4.5z" fill="#fff" stroke="#3f8a3f" /></svg></Btn>
                <Btn><svg width="16" height="8" viewBox="0 0 16 8"><rect x=".5" y="1" width="15" height="6" fill="#fff" stroke="#e24141" strokeWidth="1.5" /></svg></Btn>
                <Btn><svg width="18" height="16" viewBox="0 0 18 16"><path d="M1 8c2-6 8-7 11-3l2-2v6H8l2-2C8 5 5 5 3 9zM17 8c-2 6-8 7-11 3l-2 2V7h6L8 9c2 2 5 2 7-2z" fill="#7fb07f" /></svg></Btn>
                <Btn><svg width="16" height="14" viewBox="0 0 24 20"><path d="M1 19V3l1-2h7l2 2h10v4" fill="#dcb233" /><path d="M1 8h22l-2 11H2z" fill="#f6d255" stroke="#d0a726" /></svg></Btn>
                <Btn><svg width="18" height="18" viewBox="0 0 24 24"><rect x="2.5" y="2" width="19" height="20" rx="2" fill="#6f93b8" stroke="#48698e" /><rect x="6" y="3" width="12" height="8" fill="#e8eef4" /><rect x="6" y="15" width="9" height="7" fill="#e6e6e6" /><rect x="15" y="15" width="8" height="8" fill="#5d9e4c" /><path d="M17 21l4-4" stroke="#fff" strokeWidth="1.5" /></svg></Btn>
              </div>
              <div className="mt-[13px] flex items-center pl-[1px]">
                <Check on={false} />
                <span className="ml-[5px] leading-[13px]">Corte fuera de valores del intervalo</span>
              </div>
              <div className="mt-[16px] ml-[-4px] font-bold leading-[18px]">Representación de capas</div>
              <div className="mt-[1px] ml-[-5px] mr-[-6px] h-[60px] border border-[#d6d6d6] rounded-[3px] bg-[#ebebeb] pl-[10px] pr-[11px] pt-[10px] flex items-start">
                <span className="w-[132px] leading-[22px]">Modo de mezcla</span>
                <div className="flex-1 h-[23px] rounded-[3px] border border-[#bcbcbc] bg-linear-to-b from-[#fbfbfb] to-[#ececec] flex items-center justify-between pl-[4px] pr-[8px]">
                  <span>Normal</span>
                  <DownTri />
                </div>
              </div>
            </div>
            <div className="w-[15px] mr-[3px] shrink-0 flex flex-col border-l border-[#d4d4d4] bg-[#e4e4e4]">
              <div className="h-[13px] bg-[#f8f8f8] border-b border-[#d4d4d4] flex items-center justify-center">
                <div className="w-0 h-0 border-x-[4px] border-x-transparent border-b-[4px] border-b-[#666]" />
              </div>
              <div className="h-[136px]" />
              <div className="h-[181px] bg-[#fafafa] border-y border-[#d0d0d0]" />
              <div className="flex-1" />
              <div className="h-[13px] bg-[#f8f8f8] border-t border-[#d4d4d4] flex items-center justify-center">
                <DownTri />
              </div>
            </div>
          </div>
          <div className="h-[32px] shrink-0 flex items-center pl-[3px] pr-[3px]">
            <Btn w="w-[24px]"><svg width="16" height="14" viewBox="0 0 16 14"><path d="M7 1L1 6l6 5V8c3 0 5 1 6 5 1-6-1-9-6-9z" fill="#e8772e" /></svg></Btn>
            <div className="w-[6px]" />
            <Btn w="w-[24px]"><svg width="16" height="14" viewBox="0 0 16 14"><path d="M9 1l6 5-6 5V8c-3 0-5 1-6 5-1-6 1-9 6-9z" fill="#5fa85f" /></svg></Btn>
            <div className="ml-[109px]"><Check /></div>
            <span className="ml-[6px]">Actualización en vivo</span>
            <div className="ml-auto">
              <Btn w="w-[80px]">
                <svg width="11" height="10" viewBox="0 0 11 10" className="mr-[6px]"><path d="M1 5l3 3 6-7" fill="none" stroke="#d5dbe0" strokeWidth="1.4" /></svg>
                Aplicar
              </Btn>
            </div>
          </div>
        </div>
      </div>
    </div>
    <div className="h-[26px] shrink-0 flex items-stretch">
      <div className="w-[229px] h-[24px] mt-[1px] bg-[#e0e0e0] border border-[#c8c8c8] flex items-center pl-[11px]">Caja de herramientas de Procesos</div>
      <div className="w-[115px] bg-[#f6f6f6] border border-[#c8c8c8] rounded-b-[3px] flex items-center justify-center">Estilo de capas</div>
    </div>
  </div>
);

const SBox = ({ w, children, cls = '' }) => (
  <div className={`${w} h-[23px] shrink-0 bg-white border border-[#bcbcbc] rounded-[3px] flex items-center ${cls}`}>{children}</div>
);

const StatusBar = () => (
  <div className="h-[30px] shrink-0 bg-[#efefef] flex items-center text-[10px] tracking-[-0.2px] text-[#2a2a2a] pl-[4px] pt-[1px]">
    <SBox w="w-[325px]" cls="pl-[7px] text-[13px] tracking-normal text-[#8a8a8a]">
      <Search size={14} color="#9a9a9a" />
      <span className="ml-[7px]">Escriba para localizar (Ctrl+K)</span>
    </SBox>
    <span className="ml-[8px]">Preparado</span>
    <span className="ml-[75px]">Coordenada</span>
    <SBox w="w-[99px]" cls="ml-[3px] justify-center">777568,8285782</SBox>
    <svg width="18" height="18" viewBox="0 0 18 18" className="ml-[3px] shrink-0"><path d="M6 2l3 2 3 5 1 5c-1 3-5 3-7 1L4 9z" fill="#555" stroke="#222" /><path d="M5 7l7-2M6 11l7-1" stroke="#eee" /><path d="M14 1l2 3" stroke="#555" /></svg>
    <span className="ml-[11px]">Escala</span>
    <SBox w="w-[95px]" cls="ml-[5px] pl-[2px] justify-between overflow-hidden">
      1:1932514
      <div className="w-[19px] h-full border-l border-[#c4c4c4] bg-linear-to-b from-[#fbfbfb] to-[#ececec] flex items-center justify-center"><DownTri /></div>
    </SBox>
    <svg width="13" height="16" viewBox="0 0 13 16" className="ml-[12px] shrink-0"><path d="M3 7V4a3.5 3.5 0 0 1 7 0v3" fill="none" stroke="#777" strokeWidth="1.6" /><rect x="1" y="7" width="11" height="8.5" rx="1" fill="#6a6a6a" /></svg>
    <span className="ml-[8px]">Amplificador</span>
    <SBox w="w-[93px]" cls="ml-[2px] pl-[3px] justify-between">100%<SpinArrows /></SBox>
    <span className="ml-[12px]">Rotación</span>
    <SBox w="w-[90px]" cls="ml-[10px] pl-[4px] justify-between">0.0 °<SpinArrows /></SBox>
    <div className="ml-[7px]"><Check /></div>
    <span className="ml-[5px]">Representar</span>
    <div className="ml-[15px]"><I s={15}>{ICONS.globeSm}</I></div>
    <span className="ml-[3px]">EPSG:32718</span>
    <svg width="16" height="15" viewBox="0 0 16 15" className="ml-[24px] shrink-0"><path d="M8 1c4 0 7 2.5 7 6s-3 6-7 6H5l-3 2 1-3C2 11 1 9 1 7c0-3.5 3-6 7-6z" fill="#4a4a4a" /><path d="M5 7h.01M8 7h.01M11 7h.01" stroke="#fff" strokeWidth="2" strokeLinecap="round" /></svg>
    <svg width="20" height="22" viewBox="0 0 20 22" className="ml-[13px] shrink-0"><path d="M2 10h4V7h5v3h3v9H2z" fill="#8a8a8a" /><path d="M15 1l1 3 3 .5-2 2 .5 3-2.5-1.5L13 9.5l.5-3-2-2 3-.5z" fill="#fff" stroke="#8a8a8a" strokeWidth=".6" /></svg>
  </div>
);

export default function App() {
  return (
    <div className="w-[1360px] h-[768px] overflow-hidden flex flex-col bg-[#efefef] font-['Noto_Sans',sans-serif] text-[13px]">
      <TopBar />
      <TitleBar />
      <MenuBar />
      <ToolRow items={row1} h="h-[38px]" />
      <ToolRow items={row2} h="h-[40px]" />
      <div className="h-[591px] shrink-0 flex">
        <LayersPanel />
        <div className="w-[6px] shrink-0 flex items-center justify-center">
          <div className="h-[16px] w-[2px] border-l border-dotted border-[#999]" />
        </div>
        <div className="w-[581px] shrink-0 bg-white border border-[#bcbcbc] pl-[15px] pt-[21px]">
          <TerrainMap />
        </div>
        <div className="w-[7px] shrink-0 flex items-center justify-center">
          <div className="h-[16px] w-[2px] border-l border-dotted border-[#999]" />
        </div>
        <StylePanel />
      </div>
      <StatusBar />
    </div>
  );
}
